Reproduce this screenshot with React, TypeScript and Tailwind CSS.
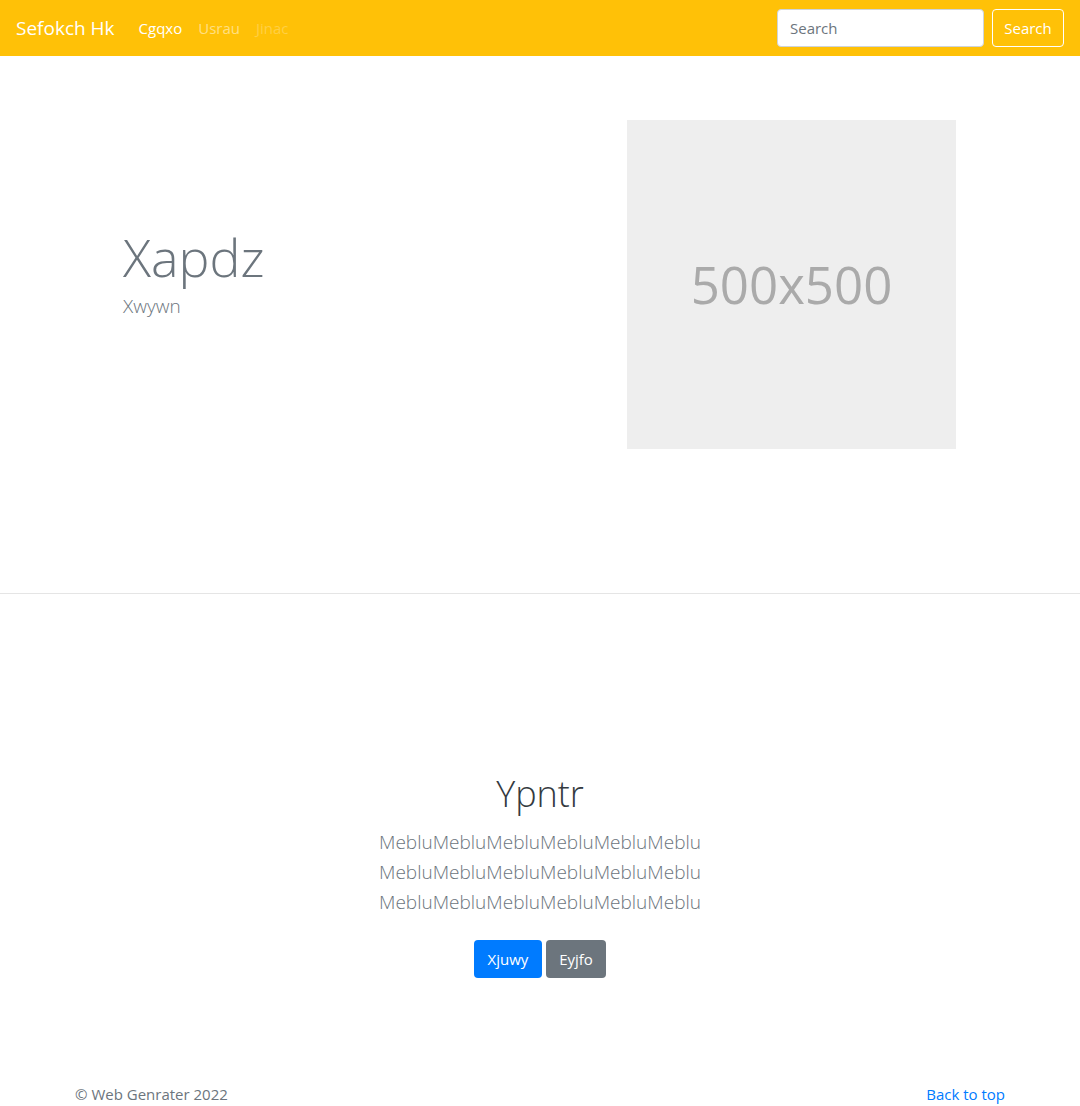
import React from "react";

const font = { fontFamily: '"Open Sans", "Noto Sans", sans-serif' };

const Navbar = () => {
  return (
    <nav className="h-14 bg-[#ffc107] px-4 flex items-center">
      <a className="text-[19px] text-white leading-[30px] mr-4">Sefokch Hk</a>
      <ul className="flex items-center">
        <li>
          <a className="block px-2 py-2 text-[15px] text-white">Cgqxo</a>
        </li>
        <li>
          <a className="block px-2 py-2 text-[15px] text-white/50">Usrau</a>
        </li>
        <li>
          <a className="block px-2 py-2 text-[15px] text-white/25">Jinac</a>
        </li>
      </ul>
      <form className="ml-auto flex items-center">
        <input
          className="w-[207px] h-[38px] px-3 rounded bg-white border border-[#ced4da] text-[15px] text-[#495057] placeholder:text-[#6c757d] outline-none mr-2"
          placeholder="Search"
        />
        <button
          type="button"
          className="w-[72px] h-[38px] rounded border border-white text-white text-[15px]"
        >
          Search
        </button>
      </form>
    </nav>
  );
};

const Hero = () => {
  return (
    <section className="border-b border-[#e5e5e5] pt-16 pb-[144px]">
      <div className="w-[960px] mx-auto px-[15px] flex">
        <div className="w-1/2 pl-12 pt-[106px]">
          <h1 className="text-[52px] leading-[1.2] font-light text-[#6c757d]">Xapdz</h1>
          <p className="mt-[3px] text-[19px] leading-[30px] font-light text-[#6c757d]">Xwywn</p>
        </div>
        <div className="w-1/2">
          <div className="ml-[87px] w-[329px] h-[329px] bg-[#eeeeee] flex items-center justify-center">
            <span className="text-[51px] text-[#aaaaaa]">500x500</span>
          </div>
        </div>
      </div>
    </section>
  );
};

const lines = ["MebluMebluMebluMebluMebluMeblu", "MebluMebluMebluMebluMebluMeblu", "MebluMebluMebluMebluMebluMeblu"];

const Album = () => {
  return (
    <section className="pt-[178px] text-center">
      <div className="w-[960px] mx-auto px-[15px]">
        <h1 className="text-[36px] leading-[1.2] font-light text-[#343a40] mb-3">Ypntr</h1>
        <p className="text-[19px] leading-[30px] font-light text-[#6c757d]">
          {lines.map((l, i) => (
            <span key={i} className="block">
              {l}
            </span>
          ))}
        </p>
        <div className="mt-[23px] flex justify-center gap-1">
          <button className="w-[68px] h-[38px] rounded bg-[#007bff] text-white text-[15px]">Xjuwy</button>
          <button className="w-[60px] h-[38px] rounded bg-[#6c757d] text-white text-[15px]">Eyjfo</button>
        </div>
      </div>
    </section>
  );
};

const Footer = () => {
  return (
    <footer className="pt-[104px]">
      <div className="w-[960px] mx-auto px-[15px] flex justify-between text-[15px] leading-6">
        <p className="text-[#6c757d]">© Web Genrater 2022</p>
        <a className="text-[#007bff]">Back to top</a>
      </div>
    </footer>
  );
};

export default function App() {
  return (
    <div className="bg-white min-h-[1106px]" style={font}>
      <Navbar />
      <Hero />
      <Album />
      <Footer />
    </div>
  );
}
